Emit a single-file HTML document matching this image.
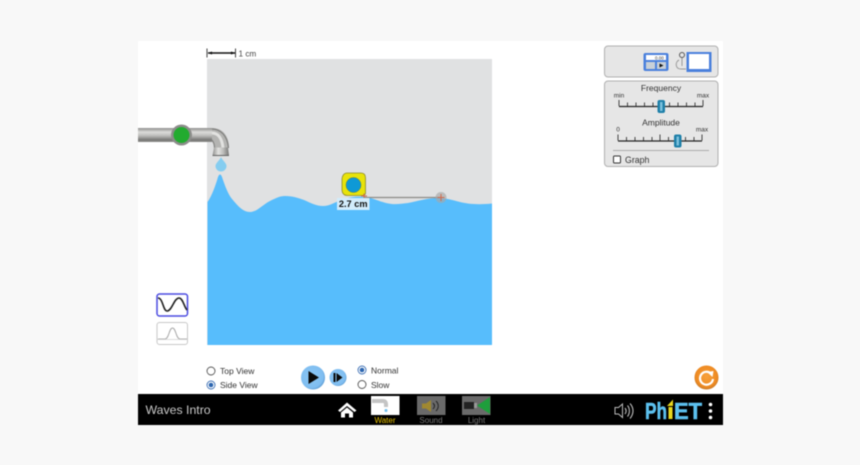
<!DOCTYPE html>
<html><head><meta charset="utf-8">
<style>
html,body{margin:0;padding:0;width:860px;height:465px;overflow:hidden;background:#f8f8f8}
svg{display:block;filter:blur(0.5px)}
text{font-family:"Liberation Sans",sans-serif}
</style></head>
<body>
<svg width="860" height="465" viewBox="0 0 860 465" xmlns="http://www.w3.org/2000/svg">
<defs>
<linearGradient id="pipe" x1="0" y1="0" x2="0" y2="1">
<stop offset="0" stop-color="#8f8f8d"/><stop offset=".3" stop-color="#dcdcda"/><stop offset=".55" stop-color="#bdbdbb"/><stop offset=".85" stop-color="#777775"/><stop offset="1" stop-color="#8f8f8d"/>
</linearGradient>
<linearGradient id="pipeV" x1="0" y1="0" x2="1" y2="0">
<stop offset="0" stop-color="#8f8f8d"/><stop offset=".35" stop-color="#e2e2e0"/><stop offset=".65" stop-color="#bdbdbb"/><stop offset="1" stop-color="#777775"/>
</linearGradient>
<radialGradient id="btn" cx=".45" cy=".45" r=".6">
<stop offset="0" stop-color="#8cc8f5"/><stop offset=".8" stop-color="#7fbdf0"/><stop offset="1" stop-color="#4f8fc8"/>
</radialGradient>
<radialGradient id="org" cx=".5" cy=".45" r=".55">
<stop offset="0" stop-color="#f7a13c"/><stop offset=".8" stop-color="#ee8a22"/><stop offset="1" stop-color="#c87a28"/>
</radialGradient>
</defs>

<rect x="138" y="41" width="585" height="384" fill="#fff"/>

<!-- water tank -->
<rect x="207" y="59" width="285" height="286" fill="#e0e1e2"/>
<path d="M207.500 345V202C212 196 216 184 218 177Q220 172 222 177C225 186 228 194 232 199C238 206 243 212 250 212C257 212 262 205 270 201C276 198 280 196 285 196C293 196 298 198 304 200C311 203 316 206 323 206C330 206 335 202 344 199C351 197 358 196 365 197C373 198 378 201 386 203C394 205 400 204 408 203C418 201 428 198 438 198C446 198 452 200 460 202C468 204 478 205 492 203.500V345Z" fill="#57bdfc"/>

<!-- scale -->
<path d="M207 48.500V57.500M235.500 48.500V57.500" stroke="#444" stroke-width="1"/>
<path d="M208 53H235" stroke="#111" stroke-width="1.400"/>
<path d="M208 53L212 51.500V54.500ZM235 53L231 51.500V54.500Z" fill="#111"/>
<text x="238.500" y="56.500" font-size="8.200" fill="#444">1 cm</text>

<!-- faucet -->
<rect x="138" y="128" width="76" height="14" fill="url(#pipe)"/>
<path d="M212 128C222 128 229 135 229 148H214C214 144 213.500 142 212 142Z" fill="#b4b4b2"/>
<path d="M212 129C220 129 227.500 135 228.500 148" fill="none" stroke="#7f7f7d" stroke-width="1.200"/>
<path d="M212 133C218 133 222 138 223 148" fill="none" stroke="#e2e2e0" stroke-width="3"/>
<path d="M212 140C213.500 142 214.500 144 214.500 148" fill="none" stroke="#858583" stroke-width="1.200"/>
<path d="M214 147.500H228L229 155.500H212.500Z" fill="url(#pipeV)"/>
<path d="M212.500 155.500H229" stroke="#666" stroke-width="1"/>
<circle cx="181.500" cy="135" r="10.500" fill="#8d8d8b"/>
<circle cx="181.500" cy="135" r="8" fill="#22ab2f"/>
<path d="M221 157C222 160 226.500 163 226.500 166A5.500 5.500 0 0 1 215.500 166C215.500 163 220 160 221 157Z" fill="#85cdf0"/>

<!-- tape measure -->
<path d="M364 197.500H441" stroke="#8a8a86" stroke-width="1.300"/>
<circle cx="441" cy="197.500" r="5.500" fill="#a8a8a8" opacity=".65"/>
<path d="M437.500 197.500H444.500M441 194V201" stroke="#d2694a" stroke-width="1"/>
<path d="M347 173H361C364 173 365.500 175 365.500 178V193C365.500 195 364 195.500 362 195.500H347C344 195.500 342 193 342 190V179C342 176 344 173 347 173Z" fill="#e8e30a" stroke="#8c8a28" stroke-width=".8"/>
<circle cx="353.500" cy="185" r="7.500" fill="#0e99d6" stroke="#5a7a50" stroke-width=".5"/>
<path d="M361 196H367M364 193.500V198.500" stroke="#d2694a" stroke-width="1"/>
<rect x="337" y="198" width="32.500" height="12" fill="#d2ecfc"/>
<text x="353.200" y="207" font-size="9.200" font-weight="bold" fill="#111" text-anchor="middle">2.7 cm</text>

<!-- wave buttons -->
<rect x="157" y="294" width="30.500" height="22" rx="2.500" fill="#fff" stroke="#4a4ae0" stroke-width="1.500"/>
<path d="M158 298C163 298 163 311 167 311C172 311 174 298 179 298C183 298 184 307 187 310" fill="none" stroke="#222" stroke-width="1.600"/>
<rect x="157" y="322.500" width="30.500" height="22" rx="2.500" fill="#fff" stroke="#c8c8c8" stroke-width="1"/>
<path d="M158 339H165C169 339 169 328 172.500 328C176 328 176 339 180 339H187" fill="none" stroke="#a8a8a8" stroke-width="1"/>
<path d="M157 339.500H187.500" stroke="#d0d0d0" stroke-width=".8"/>

<!-- radios -->
<circle cx="211" cy="371" r="4" fill="#fff" stroke="#555" stroke-width=".9"/>
<text x="220" y="374" font-size="8.500" fill="#333">Top View</text>
<circle cx="211" cy="385" r="4" fill="#fff" stroke="#3c6fb4" stroke-width=".9"/>
<circle cx="211" cy="385" r="2.300" fill="#2c66b0"/>
<text x="220" y="388" font-size="8.500" fill="#333">Side View</text>

<!-- play -->
<circle cx="313" cy="377.500" r="12" fill="url(#btn)"/>
<path d="M308.500 371L319 377.500L308.500 384Z" fill="#0a0a0a"/>
<circle cx="338" cy="377.500" r="8.500" fill="url(#btn)"/>
<rect x="333.500" y="373" width="2" height="9" fill="#0a0a0a"/>
<path d="M336.500 373L342.500 377.500L336.500 382Z" fill="#0a0a0a"/>
<circle cx="362" cy="370" r="4" fill="#fff" stroke="#3c6fb4" stroke-width=".9"/>
<circle cx="362" cy="370" r="2.300" fill="#2c66b0"/>
<text x="371" y="373.500" font-size="8.500" fill="#333">Normal</text>
<circle cx="362" cy="384.500" r="4" fill="#fff" stroke="#555" stroke-width=".9"/>
<text x="371" y="388" font-size="8.500" fill="#333">Slow</text>

<!-- reset -->
<circle cx="706.500" cy="377.500" r="12" fill="url(#org)"/>
<path d="M711 373.500A6.500 6.500 0 1 0 713 379" fill="none" stroke="#fff" stroke-width="2.200"/>
<path d="M707 372L713.500 371L712.500 377Z" fill="#fff"/>

<!-- top right panel -->
<rect x="604.500" y="46" width="113.500" height="31" rx="3.500" fill="#e6e6e6" stroke="#b0b0b0"/>
<rect x="643.500" y="53" width="25" height="18" rx="2" fill="#4a80dc"/>
<rect x="646" y="55" width="20" height="5" fill="#fff"/>
<text x="655" y="59.500" font-size="4.500" fill="#333">0.00</text>
<rect x="646" y="62" width="9" height="7" fill="#c8d0d8"/>
<rect x="657" y="62" width="9" height="7" fill="#c8d0d8"/>
<path d="M659.500 63.500L663.500 65.500L659.500 67.500Z" fill="#111"/>
<rect x="686.500" y="52" width="25" height="20" fill="#4a80dc"/>
<rect x="689" y="54" width="20" height="15" fill="#fff"/>
<circle cx="682" cy="55" r="2.500" fill="none" stroke="#555" stroke-width="1"/>
<path d="M682 58V66M679 60C675 62 675 69 681 69L686 69" fill="none" stroke="#999" stroke-width="1"/>

<!-- sliders panel -->
<rect x="604.500" y="81" width="113.500" height="85.500" rx="3.500" fill="#e6e6e6" stroke="#b0b0b0"/>
<text x="661" y="91" font-size="8.500" fill="#333" text-anchor="middle">Frequency</text>
<text x="619" y="97.500" font-size="6.500" fill="#333" text-anchor="middle">min</text>
<text x="703" y="97.500" font-size="6.500" fill="#333" text-anchor="middle">max</text>
<path d="M619 106.500H703" stroke="#222" stroke-width="1.300"/>
<path d="M619 100V106M703 100V106M661 100V106M627.500 102.500V106M636 102.500V106M644.500 102.500V106M653 102.500V106M669.500 102.500V106M678 102.500V106M686.500 102.500V106M695 102.500V106" stroke="#333" stroke-width=".9"/>
<rect x="657.500" y="100" width="7.500" height="13" rx="2" fill="#1e7fa8"/>
<rect x="660" y="102" width="2.500" height="9" fill="#7cc0dc"/>

<text x="661" y="125.500" font-size="8.500" fill="#333" text-anchor="middle">Amplitude</text>
<text x="618" y="131.500" font-size="6.500" fill="#333" text-anchor="middle">0</text>
<text x="702" y="131.500" font-size="6.500" fill="#333" text-anchor="middle">max</text>
<path d="M618 141H702" stroke="#222" stroke-width="1.300"/>
<path d="M618 134.500V140.500M702 134.500V140.500M660 134.500V140.500M626.500 137V140.500M635 137V140.500M643.500 137V140.500M652 137V140.500M668.500 137V140.500M677 137V140.500M685.500 137V140.500M694 137V140.500" stroke="#333" stroke-width=".9"/>
<rect x="674" y="134.500" width="7.500" height="13" rx="2" fill="#1e7fa8"/>
<rect x="676.500" y="136.500" width="2.500" height="9" fill="#7cc0dc"/>

<path d="M613 150.500H709" stroke="#999" stroke-width=".8"/>
<rect x="613.500" y="156" width="7" height="7" rx="1" fill="#fff" stroke="#333" stroke-width="1"/>
<text x="625" y="163" font-size="8.800" fill="#333">Graph</text>

<!-- nav bar -->
<rect x="138" y="394" width="585" height="31" fill="#000"/>
<text x="145.500" y="414" font-size="12.300" fill="#c8c8c8">Waves Intro</text>
<path d="M338 410.500L347 402.500L356.500 410.500L354.500 412L347 406L340 412Z" fill="#fff"/>
<path d="M341 412.500L347 407.500L353 412.500V417.500H349V413.500H345V417.500H341Z" fill="#fff"/>

<rect x="371" y="396" width="28.500" height="19" fill="#fff"/>
<path d="M372 399H383C386 399 388 401 388 404V407H384V405C384 404 384 403 383 403H372Z" fill="#c4c4c4"/>
<circle cx="386" cy="410.500" r="1.500" fill="#70c0f0"/>
<text x="385" y="423" font-size="8" fill="#e8c200" text-anchor="middle">Water</text>

<rect x="417" y="396" width="28.500" height="19" fill="#6a6a6a"/>
<path d="M422 403.500H426L431 400V412L426 408.500H422Z" fill="#a08830"/>
<path d="M433 403C435 405 435 407 433 409M436 401C439 404 439 408 436 411" fill="none" stroke="#222" stroke-width="1"/>
<text x="431" y="423" font-size="8" fill="#777" text-anchor="middle">Sound</text>

<rect x="462" y="396" width="28.500" height="19" fill="#6a6a6a"/>
<rect x="464" y="402" width="10" height="7" fill="#222"/>
<rect x="474" y="403" width="3" height="5" fill="#999"/>
<path d="M477 405.500L490 397V414Z" fill="#1f9e3c"/>
<text x="476.500" y="423" font-size="8" fill="#777" text-anchor="middle">Light</text>

<!-- sound -->
<path d="M615 407.500H618.500L622.500 404V417.500L618.500 414H615Z" fill="none" stroke="#bbb" stroke-width="1"/>
<path d="M625 408C626.500 410 626.500 412 625 414M627.500 405.500C630 408.500 630 413 627.500 416.500M630 403.500C634 408 634 413.500 630 418.500" fill="none" stroke="#bbb" stroke-width="1.100"/>

<!-- PhET -->
<text x="645" y="419" font-size="23" font-weight="bold" fill="#5cc0ee" stroke="#5cc0ee" stroke-width=".6" textLength="22" lengthAdjust="spacingAndGlyphs">Ph</text>
<rect x="668.500" y="407" width="4" height="12" fill="#e8d81e"/>
<path d="M667 406L673 399.500V406Z" fill="#e8d81e"/>
<text x="674" y="419" font-size="23" font-weight="bold" fill="#5cc0ee" stroke="#5cc0ee" stroke-width=".6" textLength="28" lengthAdjust="spacingAndGlyphs">ET</text>
<circle cx="710.500" cy="404.500" r="1.800" fill="#fff"/>
<circle cx="710.500" cy="411" r="1.800" fill="#fff"/>
<circle cx="710.500" cy="417.500" r="1.800" fill="#fff"/>
</svg>
</body></html>
